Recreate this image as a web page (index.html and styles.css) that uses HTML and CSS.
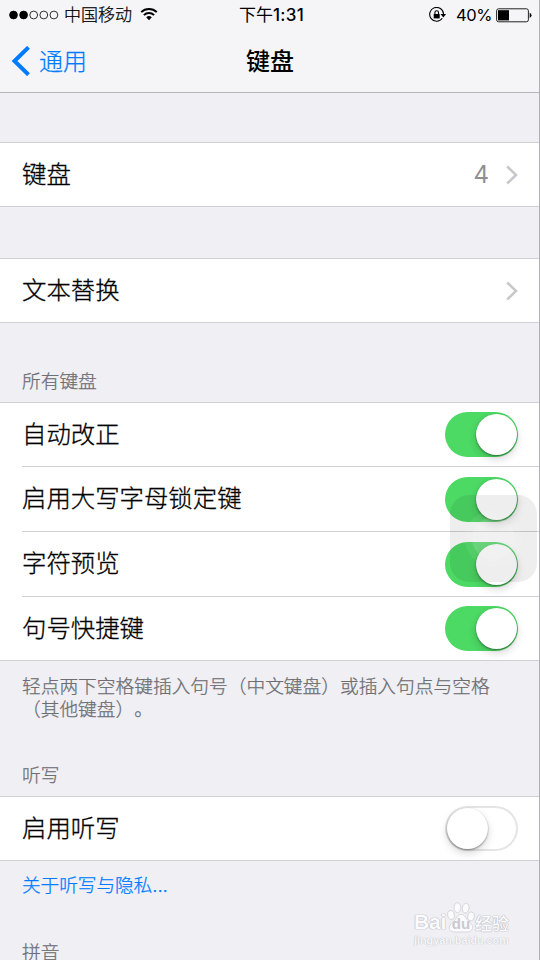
FILE: index.html
```html
<!DOCTYPE html>
<html lang="zh-CN">
<head>
<meta charset="utf-8">
<title>键盘</title>
<link rel="stylesheet" href="styles.css">
</head>
<body>
<div class="screen">
  <header class="header">
    <div class="status">
      <div class="status-left">
        <svg class="signal" width="50" height="10" viewBox="0 0 50 10"><g stroke="#000" stroke-width="0.8"><circle cx="4.5" cy="5" r="3.9"/><circle cx="14.6" cy="5" r="3.9"/><g fill="none"><circle cx="24.7" cy="5" r="3.9"/><circle cx="34.8" cy="5" r="3.9"/><circle cx="44.9" cy="5" r="3.9"/></g></g></svg>
        <span class="carrier">中国移动</span>
        <svg class="wifi" width="18" height="14" viewBox="0 0 18 14"><path d="M1.2 5.1a11.2 11.2 0 0 1 15.6 0M3.9 8.1a7.3 7.3 0 0 1 10.2 0" fill="none" stroke="#000" stroke-width="2"/><path d="M9 13.2 6.2 10.3a4 4 0 0 1 5.6 0z"/></svg>
      </div>
      <span class="time">下午<b>1:31</b></span>
      <div class="status-right">
        <svg class="lock" width="18" height="16" viewBox="0 0 18 16"><path d="M13.3 11.2A6.9 6.9 0 1 1 14.500 7" fill="none" stroke="#000" stroke-width="1.1"/><path d="M11.5 7h5.6l-2.8 3.4z"/><rect x="4.7" y="7" width="6" height="4.4"/><path d="M5.9 7V5.6a1.8 1.8 0 0 1 3.6 0V7" fill="none" stroke="#000" stroke-width="1.1"/></svg>
        <span class="percent">40%</span>
        <svg class="battery" width="36" height="15" viewBox="0 0 36 15"><rect x=".6" y=".8" width="31.8" height="13" rx="2" fill="none" stroke="#222" stroke-width="1"/><rect x="2" y="2.2" width="11" height="10.2"/><path d="M33.7 4.7q1.8.7 1.8 2.6t-1.8 2.6z"/></svg>
      </div>
    </div>
    <nav class="nav">
      <a class="back"><svg width="19" height="30" viewBox="0 0 19 30"><path d="M17.500 1.300 3.500 15 17.500 28.700" fill="none" stroke="#007aff" stroke-width="4"/></svg><span>通用</span></a>
      <h1 class="title">键盘</h1>
    </nav>
  </header>
  <main>
    <section class="group group-first">
      <div class="row"><span class="label">键盘</span><span class="value">4</span><svg class="chevron" width="12" height="20" viewBox="0 0 12 20"><path d="M1.2 1.5 10 10l-8.800 8.500" fill="none" stroke="#c7c7cc" stroke-width="2.5"/></svg></div>
    </section>
    <section class="group group-second">
      <div class="row"><span class="label">文本替换</span><svg class="chevron" width="12" height="20" viewBox="0 0 12 20"><path d="M1.2 1.5 10 10l-8.800 8.500" fill="none" stroke="#c7c7cc" stroke-width="2.5"/></svg></div>
    </section>
    <h2 class="heading heading-all">所有键盘</h2>
    <section class="group group-switches">
      <div class="row"><span class="label">自动改正</span><span class="switch on"><i></i></span></div>
      <div class="row"><span class="label">启用大写字母锁定键</span><span class="switch on"><i></i></span></div>
      <div class="row"><span class="label">字符预览</span><span class="switch on"><i></i></span></div>
      <div class="row"><span class="label">句号快捷键</span><span class="switch on"><i></i></span></div>
      <div class="assistive"><div class="ring"><div class="core"></div></div></div>
    </section>
    <p class="note">轻点两下空格键插入句号（中文键盘）或插入句点与空格<br>（其他键盘）。</p>
    <h2 class="heading heading-dictation">听写</h2>
    <section class="group">
      <div class="row"><span class="label">启用听写</span><span class="switch"><i></i></span></div>
    </section>
    <a class="link">关于听写与隐私...</a>
    <h2 class="heading heading-pinyin">拼音</h2>
  </main>
  <div class="edge"></div>
  <div class="watermark">
    <div class="brand"><span class="bai">Bai</span><svg width="28" height="31" viewBox="0 0 28 31"><g fill="#fbfbfd" stroke="#d2d2d8" stroke-width=".9"><ellipse cx="4" cy="13" rx="3.300" ry="4.500" transform="rotate(-12 4 13)"/><ellipse cx="10.400" cy="5.700" rx="3.400" ry="5"/><ellipse cx="18.700" cy="6.200" rx="3.400" ry="4.900" transform="rotate(10 18.700 6.200)"/><ellipse cx="24" cy="14.400" rx="3.300" ry="4.400" transform="rotate(12 24 14.400)"/><path d="M14 12.500c4 0 5 4.500 8 7 3 2.600 4.500 5 3 8-1.500 3-5 2.500-11 2.500S4 30.500 2.500 27.500C1.500 24 4 21.500 6.500 19.500c3-2.500 3.500-7 7.500-7z"/></g><text x="14" y="27" text-anchor="middle" class="du">du</text></svg><span class="exp">经验</span></div>
    <div class="site">jingyan.baidu.com</div>
  </div>
</div>
</body>
</html>
```
FILE: styles.css
```css
* { box-sizing: border-box; }
body { margin: 0; }
.screen {
  position: relative;
  width: 540px;
  height: 960px;
  overflow: hidden;
  background: #efeff4;
  color: #000;
  font-family: Inter, "Noto Sans CJK SC", sans-serif;
  text-spacing-trim: space-all;
}
svg { display: block; flex: none; }
.header { height: 93px; background: #f5f5f7; border-bottom: 1px solid #b5b5b9; }
.status {
  display: grid;
  grid-template-columns: 1fr auto 1fr;
  align-items: center;
  height: 30px;
  padding: 0 8px 0 9px;
  font-size: 17px;
  line-height: 30px;
}
.status-left, .status-right { display: flex; align-items: center; }
.status-right { justify-content: flex-end; }
.carrier { margin: 0 8px 0 5px; font-weight: 300; -webkit-text-stroke: .25px; }
.wifi { margin-top: -2px; }
.time { margin-left: 2px; font-weight: 400; font-size: 17px; }
.time b { font-weight: 500; letter-spacing: .3px; }
.percent { margin: 0 4px 0 9px; font-size: 16.500px; letter-spacing: -.4px; }
.nav {
  display: grid;
  grid-template-columns: 1fr auto 1fr;
  align-items: center;
  height: 62px;
  padding: 0 0 0 11px;
  margin-right: 11px;
}
.back { display: flex; align-items: center; gap: 9px; color: #007aff; font-size: 24px; font-weight: 300; line-height: 60px; -webkit-text-stroke: .25px; }
.title { margin: 0; font-size: 24px; font-weight: 500; line-height: 60px; }
.back span, .title { position: relative; top: 1px; }
.group {
  position: relative;
  background: #fff;
  border-top: 1px solid #d0d0d4;
  border-bottom: 1px solid #d0d0d4;
}
.group-first { margin-top: 49px; }
.group-second { margin-top: 51px; }
.row {
  display: flex;
  align-items: center;
  height: 63px;
  margin-left: 22px;
  padding-right: 22px;
}
.group-switches .row { height: 65px; }
.group-switches .row:first-child { height: 64px; }
.group-switches .row:nth-child(-n+3) { border-bottom: 1px solid #d0d0d4; }
.group-switches .row:nth-child(4) { height: 63px; }
.label { flex: 1; padding-bottom: 1px; font-size: 24.400px; font-weight: 300; line-height: 39px; -webkit-text-stroke: .3px; }
.value { margin-right: 18px; color: #8e8e93; font-size: 24px; }
.chevron { margin: 0 0 0 -1px; }
.switch {
  flex: none;
  width: 73px;
  height: 45px;
  padding: 2px;
  border-radius: 23px;
  background: #fff;
  box-shadow: inset 0 0 0 2px #e5e5e5;
}
.switch i {
  display: block;
  width: 41px;
  height: 41px;
  border-radius: 50%;
  background: #fff;
  box-shadow: 0 1px 2px rgba(0, 0, 0, .4), 0 4px 9px rgba(0, 0, 0, .16);
}
.switch.on { background: #4cd964; box-shadow: none; }
.switch.on i { margin-left: 29px; }
.assistive {
  position: absolute;
  top: 92px;
  right: 3px;
  width: 87px;
  height: 87px;
  padding: 15px;
  border-radius: 19px;
  background: rgba(0, 0, 0, .065);
}
.ring { height: 57px; padding: 7px; border-radius: 50%; background: rgba(255, 255, 255, .07); }
.core { height: 43px; border-radius: 50%; background: rgba(255, 255, 255, .12); }
.heading, .note, .link { color: #6d6d72; font-size: 18.720px; font-weight: 300; line-height: 24px; -webkit-text-stroke: .25px; }
.heading { margin: 0 22px; }
.heading-all { padding: 47px 0 8px; }
.note { margin: 14px 0 0 22px; line-height: 23px; white-space: nowrap; }
.heading-dictation { padding: 43px 0 8px; }
.link { display: block; margin: 13px 22px 0; color: #007aff; letter-spacing: -.1px; }
.heading-pinyin { padding-top: 43px; }
.edge { position: absolute; top: 0; right: 0; width: 1px; height: 960px; background: #b0b0b4; }
.watermark { position: absolute; left: 414px; top: 902px; width: 100px; color: #fbfbfd; }
.brand {
  display: flex;
  align-items: flex-end;
  height: 31px;
  font: 700 21px/22px "Liberation Sans", sans-serif;
  text-shadow: 0 0 1px #b8b8c0, 0 0 1px #b8b8c0, 0 0 1px #b8b8c0;
}
.bai { width: 33px; letter-spacing: -.2px; }
.brand .exp { font: 500 17px/20px "Noto Sans CJK SC", sans-serif; }
.du { fill: #c9c9cf; font: 700 15px "Liberation Sans", sans-serif; text-shadow: none; }
.site { font: 700 10.800px/15px "Liberation Sans", sans-serif; text-shadow: 0 0 1px #c4c4cc, 0 0 1px #c4c4cc; color: #f6f6f9; }
```
